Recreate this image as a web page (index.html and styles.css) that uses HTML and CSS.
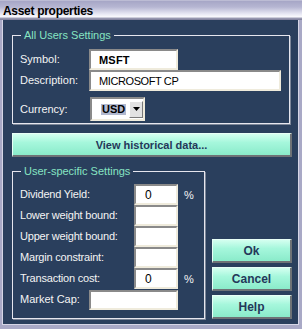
FILE: index.html
```html
<!DOCTYPE html>
<html>
<head><title>Asset properties</title><meta charset="UTF-8">
<link rel="stylesheet" href="styles.css">
</head>
<body>
<div class="window">
  <div class="titlebar">Asset properties</div>
  <div class="frame">
    <div class="panel">

      <div class="group group-all">
        <span class="legend">All Users Settings</span>
        <div class="row">
          <span class="lbl lbl-short">Symbol:</span>
          <input class="field f-sym" type="text" value="MSFT" readonly>
        </div>
        <div class="row">
          <span class="lbl lbl-short">Description:</span>
          <input class="field f-desc" type="text" value="MICROSOFT CP" readonly>
        </div>
        <div class="row row-cur">
          <span class="lbl lbl-short">Currency:</span>
          <div class="select">
            <span class="sel-value">USD</span>
            <span class="sel-btn">
              <svg width="7" height="4" viewBox="0 0 7 4"><polygon points="0,0 7,0 3.5,4" /></svg>
            </span>
          </div>
        </div>
      </div>

      <button class="btn btn-wide" type="button">View historical data...</button>

      <div class="bottom">
        <div class="group group-user">
          <span class="legend">User-specific Settings</span>
          <div class="row">
            <span class="lbl lbl-long">Dividend Yield:</span>
            <input class="field f-num" type="text" value="0" readonly>
            <span class="pct">%</span>
          </div>
          <div class="row">
            <span class="lbl lbl-long">Lower weight bound:</span>
            <input class="field f-num" type="text" value="" readonly>
          </div>
          <div class="row">
            <span class="lbl lbl-long">Upper weight bound:</span>
            <input class="field f-num" type="text" value="" readonly>
          </div>
          <div class="row">
            <span class="lbl lbl-long">Margin constraint:</span>
            <input class="field f-num" type="text" value="" readonly>
          </div>
          <div class="row">
            <span class="lbl lbl-long">Transaction cost:</span>
            <input class="field f-num" type="text" value="0" readonly>
            <span class="pct">%</span>
          </div>
          <div class="row">
            <span class="lbl lbl-short">Market Cap:</span>
            <input class="field f-cap" type="text" value="" readonly>
          </div>
        </div>

        <div class="actions">
          <button class="btn btn-act" type="button">Ok</button>
          <button class="btn btn-act" type="button">Cancel</button>
          <button class="btn btn-act" type="button">Help</button>
        </div>
      </div>

    </div>
  </div>
</div>
</body>
</html>
```

FILE: styles.css
```css
html, body { margin: 0; padding: 0; }
body {
  width: 302px; height: 329px; overflow: hidden;
  font-family: "Liberation Sans", Arial, sans-serif;
  background: #a9a9c6;
}
.window { width: 302px; }

.titlebar {
  height: 20px; box-sizing: border-box;
  padding: 4px 0 0 3px;
  font-size: 12px; line-height: 14px; font-weight: bold;
  letter-spacing: -0.3px; color: #000;
  background: linear-gradient(to bottom, #d2d2e2 0, #a6a6c6 1px, #b6b6d2 7px,
    #e8e8f4 14px, #fafafd 17px, #a0a0b8 18px, #7c7c98 20px);
}

.frame {
  border-left: 2px solid #a9a9c6;
  border-right: 3px solid #a9a9c6;
  border-bottom: 4px solid #a9a9c6;
}
.panel {
  background: #2a3f5d;
  border-left: 1px solid #d6d6e6;
  border-right: 1px solid #d6d6e6;
  border-bottom: 1px solid #d6d6e6;
  padding: 15px 6px 5px 9px;
}

/* groups */
.group {
  position: relative;
  border: 1px solid #e6e6ee;
  box-shadow: 1px 1px 0 #7c8698;
  padding-left: 7px;
}
.group-all { margin-right: 2px; padding-top: 13px; padding-bottom: 2px; }
.group-user { width: 184px; padding-top: 12px; padding-bottom: 8px; margin-top: 14px; }
.legend {
  position: absolute; top: -7px; left: 8px;
  padding: 0 3px;
  background: #2a3f5d; color: #86e4c2;
  font-size: 11px; line-height: 13px;
}

.row { display: flex; align-items: center; height: 21px; }
.row-cur { height: 24px; margin-top: 6px; }
.lbl { color: #f4f4f4; font-size: 11px; line-height: 13px; white-space: nowrap; }
.lbl-short { width: 69px; }
.lbl-long { width: 114px; letter-spacing: -0.2px; }

.field {
  box-sizing: border-box; height: 21px; margin: 0;
  padding: 0 0 0 8px;
  border-style: solid; border-width: 2px;
  border-color: #8a8a8a #efebdc #efebdc #8a8a8a;
  background: #fff; color: #000;
  font-family: "Liberation Sans", Arial, sans-serif;
  font-size: 11px; letter-spacing: -0.4px;
  outline: none;
}
.f-sym { width: 89px; font-weight: bold; letter-spacing: 0.2px; }
.f-desc { width: 192px; }
.f-num { width: 44px; letter-spacing: 0; padding-left: 9px; font-size: 12px; }
.f-cap { width: 89px; height: 20px; }
.pct { color: #f4f4f4; font-size: 11px; margin-left: 6px; }

/* currency combo */
.select {
  box-sizing: border-box; width: 55px; height: 24px; margin-left: 1px;
  display: flex; align-items: center;
  padding-left: 9px;
  border-style: solid; border-width: 2px;
  border-color: #8a8a8a #efebdc #efebdc #8a8a8a;
  background: #fff;
}
.sel-value {
  background: #b2b9cf; color: #000;
  font-size: 11px; font-weight: bold; line-height: 11px;
  padding: 0 1px;
}
.sel-btn {
  box-sizing: border-box; width: 14px; height: 17px; margin-left: auto;
  display: flex; align-items: center; justify-content: center;
  background: #e2e2e2;
  border-style: solid; border-width: 1px;
  border-color: #fff #7a7a7a #7a7a7a #fff;
}
.sel-btn svg { fill: #000; }

/* buttons */
.btn {
  box-sizing: border-box; display: block; margin: 0;
  border-style: solid; border-width: 1px 2px 2px 1px;
  border-color: #e8fff6 #6e7276 #6e7276 #e8fff6;
  background: linear-gradient(to bottom, #d4fff0 0, #a6f7dc 40%, #8aebca 100%);
  color: #24385a;
  font-family: "Liberation Sans", Arial, sans-serif;
  font-weight: bold; padding: 0;
}
.btn-wide { width: 280px; height: 24px; margin-top: 9px; font-size: 11px; }

.bottom { display: flex; align-items: flex-end; }
.actions { display: flex; flex-direction: column; gap: 4px; margin-left: 7px; }
.btn-act { width: 80px; height: 24px; font-size: 12px; }
```
